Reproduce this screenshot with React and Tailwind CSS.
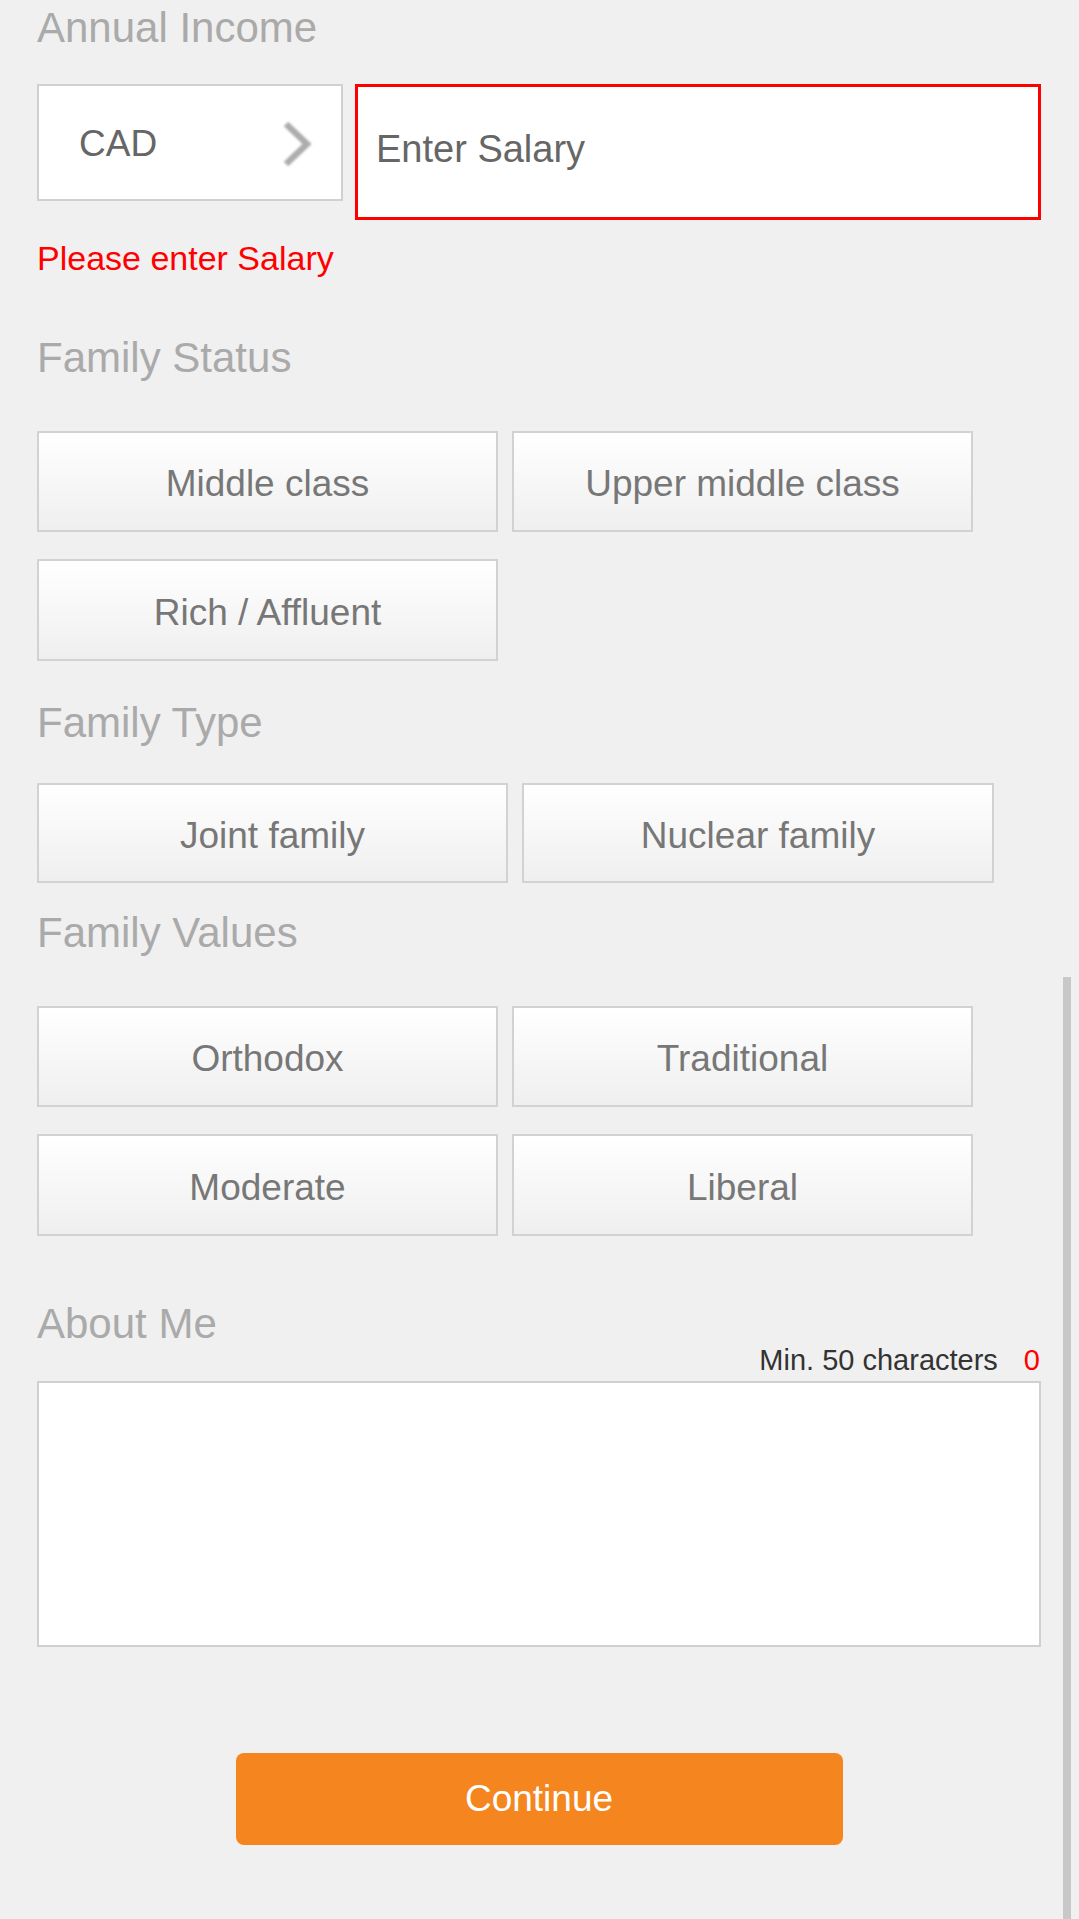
import React from "react";

function OptionButton({ label, w }) {
  return (
    <div
      className={`${w} flex items-center justify-center border-2 border-[#d2d2d2] bg-linear-to-b from-white to-[#efefef] pt-[5px] text-[37px] leading-[44px] text-[#777777]`}
    >
      {label}
    </div>
  );
}

function SectionLabel({ children, className = "" }) {
  return (
    <div className={`text-[42px] leading-[48px] text-[#aaaaaa] ${className}`}>
      {children}
    </div>
  );
}

export default function App() {
  return (
    <div className="relative h-[1919px] w-full overflow-hidden bg-[#f0f0f0] font-['Liberation_Sans',Arial,sans-serif]">
      <div className="pl-[37px] pr-[38px] pt-[4px]">
        <SectionLabel>Annual Income</SectionLabel>

        <div className="mt-[32px] flex items-start">
          <div className="relative h-[117px] w-[306px] border-2 border-[#d0d0d0] bg-white pl-[40px] pt-[36px] text-[37px] leading-[44px] text-[#666666]">
            CAD
            <svg
              className="absolute left-[241px] top-[32px] blur-[0.8px]"
              width="34"
              height="52"
              viewBox="0 0 34 52"
              fill="none"
            >
              <polyline
                points="6,6 27,26 6,46"
                stroke="#adadad"
                strokeWidth="6.5"
                strokeLinejoin="miter"
              />
            </svg>
          </div>
          <div className="ml-[12px] h-[136px] flex-1 border-[3px] border-[#ff0000] bg-white pl-[18px] pt-[40px] text-[38px] leading-[44px] text-[#666666]">
            Enter Salary
          </div>
        </div>

        <div className="mt-[18px] text-[34px] leading-[40px] text-[#ff0000]">
          Please enter Salary
        </div>

        <SectionLabel className="mt-[56px]">Family Status</SectionLabel>
        <div className="mt-[49px] flex flex-col gap-y-[27px]">
          <div className="flex gap-x-[14px]">
            <div className="h-[101px] flex"><OptionButton label="Middle class" w="w-[461px]" /></div>
            <div className="h-[101px] flex"><OptionButton label="Upper middle class" w="w-[461px]" /></div>
          </div>
          <div className="flex gap-x-[14px]">
            <div className="h-[102px] flex"><OptionButton label="Rich / Affluent" w="w-[461px]" /></div>
          </div>
        </div>

        <SectionLabel className="mt-[38px]">Family Type</SectionLabel>
        <div className="mt-[36px] flex gap-x-[14px]">
          <div className="h-[100px] flex"><OptionButton label="Joint family" w="w-[471px]" /></div>
          <div className="h-[100px] flex"><OptionButton label="Nuclear family" w="w-[472px]" /></div>
        </div>

        <SectionLabel className="mt-[26px]">Family Values</SectionLabel>
        <div className="mt-[49px] flex flex-col gap-y-[27px]">
          <div className="flex gap-x-[14px]">
            <div className="h-[101px] flex"><OptionButton label="Orthodox" w="w-[461px]" /></div>
            <div className="h-[101px] flex"><OptionButton label="Traditional" w="w-[461px]" /></div>
          </div>
          <div className="flex gap-x-[14px]">
            <div className="h-[102px] flex"><OptionButton label="Moderate" w="w-[461px]" /></div>
            <div className="h-[102px] flex"><OptionButton label="Liberal" w="w-[461px]" /></div>
          </div>
        </div>

        <div className="mt-[66px] text-[42px] leading-[43px] text-[#aaaaaa]">
          About Me
        </div>
        <div className="flex justify-end gap-x-[26px] pr-[1px] text-[29px] leading-[30px]">
          <span className="text-[#333333]">Min. 50 characters</span>
          <span className="text-[#ff0000]">0</span>
        </div>
        <div className="mt-[6px] h-[266px] w-full border-2 border-[#d0d0d0] bg-white" />

        <div className="mt-[106px] flex justify-center">
          <button className="h-[92px] w-[607px] rounded-[8px] bg-[#f5851f] text-[37px] leading-[44px] text-white">
            Continue
          </button>
        </div>
      </div>

      <div className="absolute bottom-0 left-[1063px] top-[977px] w-[8px] bg-[#c8c8c8]" />
    </div>
  );
}
